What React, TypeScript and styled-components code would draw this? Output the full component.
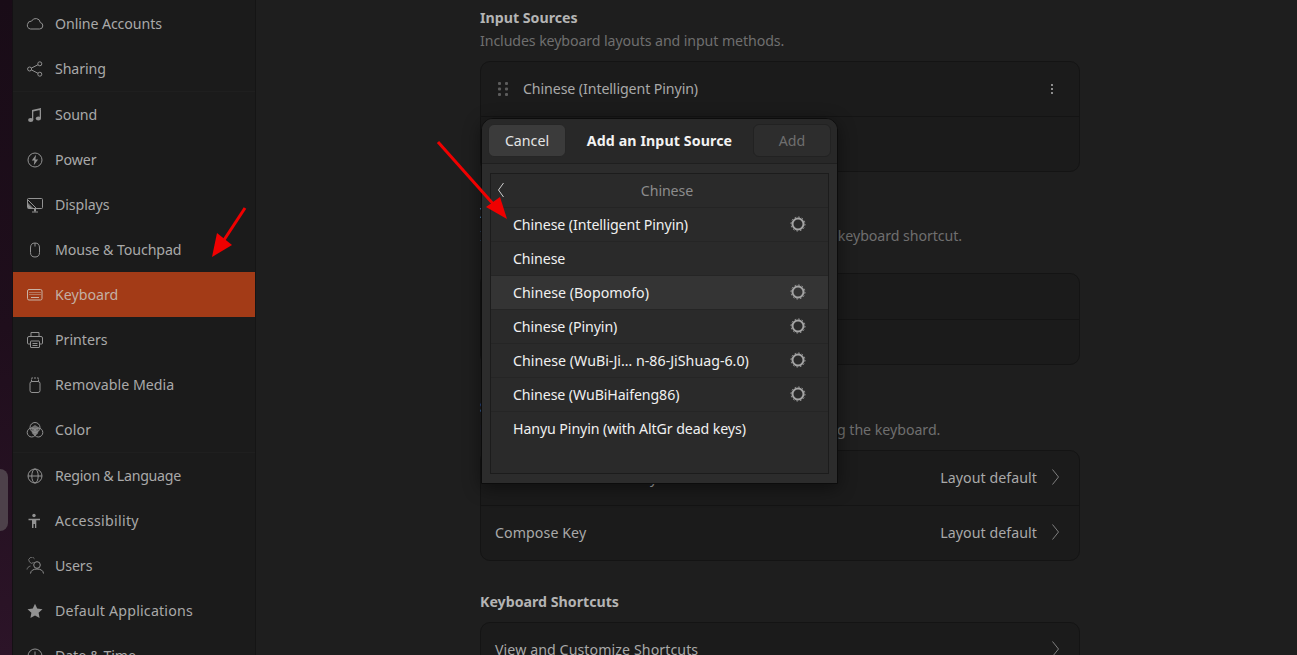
import React from "react";
import styled, { createGlobalStyle } from "styled-components";

const Global = createGlobalStyle`
  html, body { margin: 0; padding: 0; height: 655px; overflow: hidden; background: #1e1e1e; }
  #root { height: 655px; }
  * { box-sizing: border-box; }
`;

const Page = styled.div`
  position: relative;
  display: flex;
  width: 1297px;
  height: 655px;
  overflow: hidden;
  background: #1e1e1e;
  font-family: "Noto Sans", sans-serif;
  font-size: 14.2px;
  letter-spacing: -0.1px;
`;

const Wallpaper = styled.div`
  position: relative;
  flex: 0 0 13px;
  background: linear-gradient(180deg, #190c17 0%, #1f0e1c 50%, #2c1428 100%);
  border-right: 1px solid #141014;
`;

const DockHandle = styled.div`
  position: absolute;
  left: 0;
  top: 469px;
  width: 8px;
  height: 62px;
  background: #4d414a;
  border-radius: 0 8px 8px 0;
`;

const Sidebar = styled.nav`
  flex: 0 0 243px;
  padding-top: 1px;
  background: #1b1b1b;
  border-right: 1px solid #151515;
  overflow: hidden;
`;

const NavItem = styled.div<{ $active?: boolean; $track?: number }>`
  display: flex;
  align-items: center;
  gap: 11px;
  height: 45px;
  padding-left: 13px;
  letter-spacing: ${(p) => p.$track ?? -0.1}px;
  color: ${(p) => (p.$active ? "#c4b0a4" : "#a9a9a9")};
  background: ${(p) => (p.$active ? "#a33b17" : "transparent")};
  svg { flex: 0 0 18px; width: 18px; height: 18px; color: ${(p) => (p.$active ? "#c9b2a4" : "#929292")}; }
`;

const NavSep = styled.div`
  height: 1px;
  background: #1f1f1f;
`;

const Main = styled.main`
  flex: 1;
  padding: 7px 0 0 224px;
  overflow: hidden;
`;

const Column = styled.div`
  width: 600px;
`;

const SectionTitle = styled.div<{ $top?: number }>`
  margin-top: ${(p) => p.$top ?? 0}px;
  height: 20px;
  line-height: 22px;
  font-weight: 700;
  color: #b4b4b4;
  letter-spacing: 0;
`;

const SectionSub = styled.div<{ $track?: number }>`
  margin-top: 3px;
  height: 20px;
  line-height: 22px;
  color: #6f6f6f;
  letter-spacing: ${(p) => p.$track ?? -0.1}px;
  white-space: nowrap;
`;

const Card = styled.div<{ $top?: number }>`
  margin-top: ${(p) => p.$top ?? 11}px;
  background: #1b1b1b;
  border: 1px solid #141414;
  border-radius: 10px;
  overflow: hidden;
`;

const CardRow = styled.div<{ $h?: number }>`
  display: flex;
  align-items: center;
  height: ${(p) => p.$h ?? 54}px;
  padding: 0 19px 2px 14px;
  color: #a9a9a9;
`;

const CardSep = styled.div`
  height: 1px;
  background: #141414;
`;

const RowLabel = styled.span<{ $track?: number }>`
  flex: 1;
  white-space: nowrap;
  letter-spacing: ${(p) => p.$track ?? -0.1}px;
`;

const RowValue = styled.span`
  margin-right: 14px;
  color: #a9a9a9;
  letter-spacing: 0.06px;
`;

const Chevron = styled.svg`
  width: 9px;
  height: 18px;
  color: #8a8a8a;
`;

const Grip = styled.svg`
  width: 12px;
  height: 16px;
  margin: 2px 14px 0 2px;
  color: #5c5c5c;
`;

const Kebab = styled.svg`
  width: 4px;
  height: 12px;
  margin: 2px 6px 0 0;
  color: #a9a9a9;
`;

const Dialog = styled.div`
  position: absolute;
  left: 481px;
  top: 118px;
  width: 357px;
  height: 366px;
  display: flex;
  flex-direction: column;
  background: #2c2c2c;
  border: 1px solid #0c0c0c;
  border-radius: 12px 12px 0 0;
  box-shadow: 0 4px 18px rgba(0, 0, 0, 0.45);
  font-size: 14.2px;
`;

const DialogHeader = styled.header`
  flex: 0 0 45px;
  display: flex;
  align-items: center;
  justify-content: space-between;
  padding: 0 6px 1px 6px;
  background: #282828;
  border-bottom: 1px solid #1f1f1f;
  border-radius: 11px 11px 0 0;
`;

const DialogTitle = styled.h2`
  margin: 0;
  font-size: 14.2px;
  font-weight: 700;
  letter-spacing: 0.1px;
  color: #f2f2f2;
`;

const HeaderButton = styled.button<{ $disabled?: boolean }>`
  width: 78px;
  height: 33px;
  padding: 0;
  font: inherit;
  color: ${(p) => (p.$disabled ? "#6f6f6f" : "#e4e4e4")};
  background: ${(p) => (p.$disabled ? "#2d2d2d" : "#3b3b3b")};
  border: 1px solid ${(p) => (p.$disabled ? "#222222" : "#262626")};
  border-radius: 6px;
`;

const DialogBody = styled.div`
  flex: 1;
  padding: 9px 8px 9px 8px;
  display: flex;
`;

const ListFrame = styled.div`
  flex: 1;
  background: #2a2a2a;
  border: 1px solid #1c1c1c;
`;

const BackRow = styled.div`
  position: relative;
  height: 34px;
  display: flex;
  align-items: center;
  justify-content: center;
  color: #8c8c8c;
  border-bottom: 1px solid #242424;
  padding: 0 0 1px 15px;
`;

const BackIcon = styled.svg`
  position: absolute;
  left: 6px;
  top: 7px;
  width: 8px;
  height: 18px;
  color: #cfcfcf;
`;

const SourceRow = styled.div<{ $hover?: boolean; $track?: number }>`
  display: flex;
  align-items: center;
  justify-content: space-between;
  height: 34px;
  padding: 0 22px 1px;
  color: #f0f0f0;
  letter-spacing: ${(p) => p.$track ?? -0.1}px;
  background: ${(p) => (p.$hover ? "#343434" : "transparent")};
  border-bottom: 1px solid #252525;
  &:last-child { border-bottom-color: transparent; }
`;

const Gear = styled.svg`
  width: 16px;
  height: 16px;
  color: #a4a4a4;
`;

const ArrowLayer = styled.svg`
  position: absolute;
  left: 0;
  top: 0;
  width: 1297px;
  height: 655px;
  pointer-events: none;
`;

const S = { fill: "none", stroke: "currentColor", strokeWidth: 1 } as const;

const icons: Record<string, React.ReactNode> = {
  cloud: <path {...S} d="M4.500 14h9.200a3.300 3.300 0 0 0 .6-6.500A4.600 4.600 0 0 0 5.600 6.100 4 4 0 0 0 4.500 14z" />,
  share: (
    <g {...S}>
      <circle cx="3.600" cy="9" r="2" />
      <circle cx="13.800" cy="3.800" r="2" />
      <circle cx="13.800" cy="14.200" r="2" />
      <path d="M5.400 8.100l6.600-3.400M5.400 9.900l6.600 3.400" />
    </g>
  ),
  sound: (
    <g fill="currentColor">
      <path d="M6 4l9-2v1.800L7.300 5.500V14H6zM13.700 3h1.300v9.500h-1.300z" />
      <ellipse cx="4.700" cy="14" rx="2.600" ry="2" />
      <ellipse cx="12.400" cy="12.500" rx="2.600" ry="2" />
    </g>
  ),
  power: (
    <g>
      <circle {...S} cx="9" cy="9" r="7" />
      <path fill="currentColor" d="M10 3.800L5.800 9.600h2.600L7.800 14.200l4.300-5.800H9.400z" />
    </g>
  ),
  display: (
    <g {...S}>
      <rect x="1.500" y="2.500" width="15" height="10" rx="1" />
      <path d="M1.500 3.500l9 9M1.500 7l5.500 5.500M6 16h6" />
      <path fill="currentColor" stroke="none" d="M2 8l4.500 4.500H2zM8 13h2v2.500H8z" />
    </g>
  ),
  mouse: <path {...S} d="M9 2c-3 0-4.500 1.500-4.500 5v4.500c0 3 1.500 4.500 4.500 4.500s4.500-1.500 4.500-4.500V7c0-3.500-1.500-5-4.500-5zM9 2v3.500" />,
  keyboard: (
    <g>
      <rect {...S} x="1.500" y="3.500" width="14.500" height="10.500" rx="1.500" />
      <path stroke="currentColor" strokeWidth="1" strokeDasharray="1 1" fill="none" d="M3.500 6.500h11M3.500 8.500h11" />
      <path stroke="currentColor" strokeWidth="1" fill="none" d="M5 11.500h8" />
    </g>
  ),
  printer: (
    <g {...S}>
      <path d="M5 5.500V1.500h8v4M4.500 13H2.500a1 1 0 0 1-1-1V7a1.500 1.500 0 0 1 1.500-1.500h12A1.500 1.500 0 0 1 16.500 7v5a1 1 0 0 1-1 1h-2" />
      <rect x="4.500" y="10" width="9" height="6.500" rx="0.500" />
      <path d="M6.500 12.500h5M6.500 14.500h5" />
    </g>
  ),
  usb: (
    <g {...S}>
      <rect x="4" y="5.500" width="10" height="11" rx="2" />
      <path d="M5.500 5.500V2h7v3.500" strokeDasharray="2 1" />
    </g>
  ),
  color: (
    <g>
      <circle {...S} cx="9" cy="6.500" r="5" />
      <circle {...S} cx="5.700" cy="11.500" r="4.500" />
      <circle {...S} cx="12.300" cy="11.500" r="4.500" />
      <path fill="currentColor" opacity="0.7" d="M5 6.500L9 4l4 2.500-1 6L9 15l-3-2.500z" />
    </g>
  ),
  globe: (
    <g {...S}>
      <circle cx="9" cy="9" r="7" />
      <ellipse cx="9" cy="9" rx="3.200" ry="7" />
      <path d="M2 9h14" />
    </g>
  ),
  access: (
    <g fill="currentColor">
      <circle cx="8" cy="3.500" r="1.700" />
      <path d="M2.500 6.800h11.500v1.400h-3.700V16H9v-4H7.500v4H6V8.200H2.500z" />
    </g>
  ),
  users: (
    <g {...S}>
      <circle cx="11" cy="8" r="3.300" />
      <path d="M4.500 16.500c.3-3 2.800-4.500 6.500-4.500s6.200 1.500 6.500 4.500" />
      <path d="M7.700 5.500A3 3 0 1 1 8.500 1.800M1 12.500c.3-1.800 1.600-3 3.500-3.500" opacity="0.7" />
    </g>
  ),
  star: <path fill="currentColor" d="M9 1.800l2.200 4.800 5.300.6-3.900 3.600 1 5.200L9 13.400 4.400 16l1-5.200L1.500 7.200l5.300-.6z" />,
  clock: (
    <g {...S}>
      <circle cx="9" cy="9" r="7" />
      <path d="M9 4.500V9" />
    </g>
  ),
};

const Icon = ({ name }: { name: string }) => <svg viewBox="0 0 18 18">{icons[name]}</svg>;

const groups: { icon: string; label: string; active?: boolean; track?: number }[][] = [
  [
    { icon: "cloud", label: "Online Accounts" },
    { icon: "share", label: "Sharing" },
  ],
  [
    { icon: "sound", label: "Sound" },
    { icon: "power", label: "Power" },
    { icon: "display", label: "Displays" },
    { icon: "mouse", label: "Mouse & Touchpad" },
    { icon: "keyboard", label: "Keyboard", active: true, track: 0 },
    { icon: "printer", label: "Printers", track: 0 },
    { icon: "usb", label: "Removable Media", track: 0.03 },
    { icon: "color", label: "Color", track: 0.1 },
  ],
  [
    { icon: "globe", label: "Region & Language", track: -0.28 },
    { icon: "access", label: "Accessibility", track: 0.3 },
    { icon: "users", label: "Users" },
    { icon: "star", label: "Default Applications", track: 0.2 },
    { icon: "clock", label: "Date & Time" },
  ],
];

const sources: { label: string; gear?: boolean; hover?: boolean; track?: number }[] = [
  { label: "Chinese (Intelligent Pinyin)", gear: true },
  { label: "Chinese" },
  { label: "Chinese (Bopomofo)", gear: true, hover: true, track: 0.02 },
  { label: "Chinese (Pinyin)", gear: true },
  { label: "Chinese (WuBi-Ji… n-86-JiShuag-6.0)", gear: true, track: 0.02 },
  { label: "Chinese (WuBiHaifeng86)", gear: true },
  { label: "Hanyu Pinyin (with AltGr dead keys)" },
];

const RightChevron = () => (
  <Chevron viewBox="0 0 9 18">
    <path d="M1.500 1.500l6 7.500-6 7.500" fill="none" stroke="currentColor" strokeWidth="0.900" />
  </Chevron>
);

const GearIcon = () => (
  <Gear viewBox="0 0 16 16">
    <circle cx="8" cy="8" r="5.500" fill="none" stroke="currentColor" strokeWidth="2" />
    <circle cx="8" cy="8" r="7" fill="none" stroke="currentColor" strokeWidth="1" strokeDasharray="1.600 2.065" />
  </Gear>
);

export default function App() {
  return (
    <Page>
      <Global />
      <Wallpaper>
        <DockHandle />
      </Wallpaper>
      <Sidebar>
        {groups.map((g, i) => (
          <React.Fragment key={i}>
            {i > 0 && <NavSep />}
            {g.map((it) => (
              <NavItem key={it.label} $active={it.active} $track={it.track}>
                <Icon name={it.icon} />
                {it.label}
              </NavItem>
            ))}
          </React.Fragment>
        ))}
      </Sidebar>
      <Main>
        <Column>
          <SectionTitle>Input Sources</SectionTitle>
          <SectionSub>Includes keyboard layouts and input methods.</SectionSub>
          <Card>
            <CardRow>
              <Grip viewBox="0 0 12 16">
                <g fill="currentColor">
                  <rect x="1" y="1" width="3" height="3" rx="1" />
                  <rect x="8" y="1" width="3" height="3" rx="1" />
                  <rect x="1" y="6.500" width="3" height="3" rx="1" />
                  <rect x="8" y="6.500" width="3" height="3" rx="1" />
                  <rect x="1" y="12" width="3" height="3" rx="1" />
                  <rect x="8" y="12" width="3" height="3" rx="1" />
                </g>
              </Grip>
              <RowLabel>Chinese (Intelligent Pinyin)</RowLabel>
              <Kebab viewBox="0 0 4 12">
                <g fill="currentColor">
                  <circle cx="2" cy="2" r="1.100" />
                  <circle cx="2" cy="6" r="1.100" />
                  <circle cx="2" cy="10" r="1.100" />
                </g>
              </Kebab>
            </CardRow>
            <CardSep />
            <CardRow />
          </Card>
          <SectionTitle $top={30}>Input Source Switching</SectionTitle>
          <SectionSub $track={-0.07}>Input sources can be switched using the Super+Space keyboard shortcut.</SectionSub>
          <Card $top={28}>
            <CardRow $h={45}>
              <RowLabel>All Windows</RowLabel>
            </CardRow>
            <CardSep />
            <CardRow $h={44}>
              <RowLabel>Window</RowLabel>
            </CardRow>
          </Card>
          <SectionTitle $top={31}>Special Character Entry</SectionTitle>
          <SectionSub $track={-0.03}>Methods for entering symbols and letter variants using the keyboard.</SectionSub>
          <Card>
            <CardRow>
              <RowLabel>Alternate Characters Key</RowLabel>
              <RowValue>Layout default</RowValue>
              <RightChevron />
            </CardRow>
            <CardSep />
            <CardRow>
              <RowLabel $track={0.08}>Compose Key</RowLabel>
              <RowValue>Layout default</RowValue>
              <RightChevron />
            </CardRow>
          </Card>
          <SectionTitle $top={30}>Keyboard Shortcuts</SectionTitle>
          <Card>
            <CardRow>
              <RowLabel $track={0.08}>View and Customize Shortcuts</RowLabel>
              <RightChevron />
            </CardRow>
          </Card>
        </Column>
      </Main>
      <Dialog>
        <DialogHeader>
          <HeaderButton>Cancel</HeaderButton>
          <DialogTitle>Add an Input Source</DialogTitle>
          <HeaderButton $disabled>Add</HeaderButton>
        </DialogHeader>
        <DialogBody>
          <ListFrame>
            <BackRow>
              <BackIcon viewBox="0 0 8 18">
                <path d="M6.500 2L1.500 9l5 7" fill="none" stroke="currentColor" strokeWidth="1" />
              </BackIcon>
              Chinese
            </BackRow>
            {sources.map((s) => (
              <SourceRow key={s.label} $hover={s.hover} $track={s.track}>
                {s.label}
                {s.gear && <GearIcon />}
              </SourceRow>
            ))}
          </ListFrame>
        </DialogBody>
      </Dialog>
      <ArrowLayer viewBox="0 0 1297 655">
        <g stroke="#f00000" strokeWidth="3" fill="#f00000">
          <path d="M245 208L222 243" fill="none" />
          <path stroke="none" d="M212 257L217 233L232 245z" />
          <path d="M438 142L495 206" fill="none" />
          <path stroke="none" d="M507 219L486 207L500 197z" />
        </g>
      </ArrowLayer>
    </Page>
  );
}
